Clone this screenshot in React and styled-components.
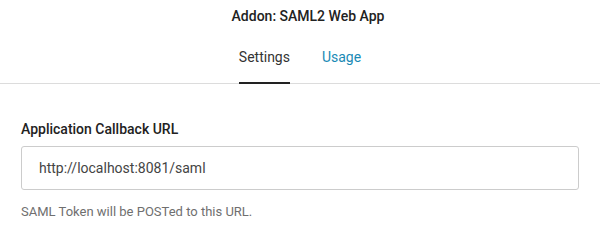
import React from "react";
import styled, { createGlobalStyle } from "styled-components";

const GlobalStyle = createGlobalStyle`
  html, body {
    margin: 0;
    padding: 0;
    background: #fff;
  }
  body {
    font-family: Roboto, "Liberation Sans", sans-serif;
    color: #333;
    -webkit-font-smoothing: antialiased;
  }
`;

const Panel = styled.div`
  width: 600px;
  height: 219px;
  overflow: hidden;
  background: #fff;
`;

const Header = styled.div`
  display: flex;
  flex-direction: column;
  align-items: center;
  border-bottom: 1px solid #dcdcdc;
`;

const Title = styled.h1`
  margin: 0;
  padding: 6px 0 0 16px;
  font-size: 14px;
  line-height: 20px;
  font-weight: 500;
  color: #222;
`;

const Tabs = styled.div`
  display: flex;
  gap: 32px;
  margin-top: 21px;
`;

const Tab = styled.a`
  display: block;
  padding-bottom: 15px;
  margin-bottom: -1px;
  font-size: 14px;
  line-height: 20px;
  text-decoration: none;
  cursor: pointer;
  color: ${p => (p.$active ? "#333" : "#1a8ab5")};
  border-bottom: 2px solid ${p => (p.$active ? "#222" : "transparent")};
`;

const Body = styled.div`
  padding: 35px 21px 0;
`;

const Label = styled.label`
  display: block;
  font-size: 14px;
  line-height: 20px;
  font-weight: 500;
  color: #222;
  margin-bottom: 7px;
`;

const Input = styled.input`
  display: block;
  box-sizing: border-box;
  width: 100%;
  height: 44px;
  padding: 0 17px;
  border: 1px solid #ccc;
  border-radius: 3px;
  font-family: inherit;
  font-size: 14px;
  color: #444;
  outline: none;
`;

const Help = styled.p`
  margin: 14px 0 0;
  font-size: 13px;
  line-height: 16px;
  color: #6f6f6f;
`;

const App = () => (
  <>
    <GlobalStyle />
    <Panel>
      <Header>
        <Title>Addon: SAML2 Web App</Title>
        <Tabs>
          <Tab $active>Settings</Tab>
          <Tab>Usage</Tab>
        </Tabs>
      </Header>
      <Body>
        <Label>Application Callback URL</Label>
        <Input defaultValue="http://localhost:8081/saml" />
        <Help>SAML Token will be POSTed to this URL.</Help>
      </Body>
    </Panel>
  </>
);

export default App;
